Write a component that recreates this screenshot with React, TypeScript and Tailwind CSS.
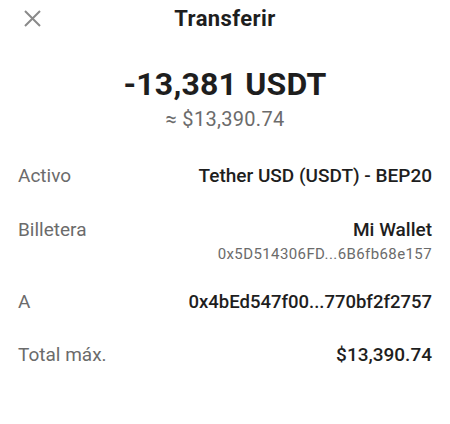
export default function App() {
  return (
    <div
      className="h-[424px] w-[450px] overflow-hidden bg-white text-[#1e1e1e]"
      style={{ fontFamily: "Roboto, 'Noto Sans', sans-serif" }}
    >
      {/* header */}
      <div className="relative flex h-[37px] items-center justify-center">
        <button className="absolute left-[24px] top-[10px] text-[#8a8a8a]">
          <svg width="17" height="17" viewBox="0 0 17 17" fill="none">
            <path d="M1 1L16 16M16 1L1 16" stroke="currentColor" strokeWidth="2" />
          </svg>
        </button>
        <h1 className="text-[22px] font-bold leading-none tracking-[0.4px]">Transferir</h1>
      </div>

      {/* amount */}
      <div className="mt-[27px] flex flex-col items-center">
        <p className="text-[32px] font-bold leading-[40px] tracking-[0.2px]">-13,381 USDT</p>
        <p className="mt-[3px] text-[20px] leading-[24px] tracking-[0.3px] text-[#6b6b6b]">≈ $13,390.74</p>
      </div>

      {/* details */}
      <div className="mt-[33px] px-[18px] text-[19px]">
        <div className="flex justify-between leading-[24px]">
          <span className="text-[#6b6b6b]">Activo</span>
          <span className="font-medium">Tether USD (USDT) - BEP20</span>
        </div>

        <div className="mt-[30px] flex justify-between">
          <span className="leading-[24px] text-[#6b6b6b]">Billetera</span>
          <div className="flex flex-col items-end">
            <span className="font-medium leading-[24px]">Mi Wallet</span>
            <span className="mt-[2px] text-[15px] leading-[20px] tracking-[0.4px] text-[#6b6b6b]">
              0x5D514306FD...6B6fb68e157
            </span>
          </div>
        </div>

        <div className="mt-[26px] flex justify-between leading-[24px]">
          <span className="text-[#6b6b6b]">A</span>
          <span className="text-[18.5px] font-medium">0x4bEd547f00...770bf2f2757</span>
        </div>

        <div className="mt-[29px] flex justify-between leading-[24px]">
          <span className="text-[#6b6b6b]">Total máx.</span>
          <span className="font-medium">$13,390.74</span>
        </div>
      </div>
    </div>
  );
}
